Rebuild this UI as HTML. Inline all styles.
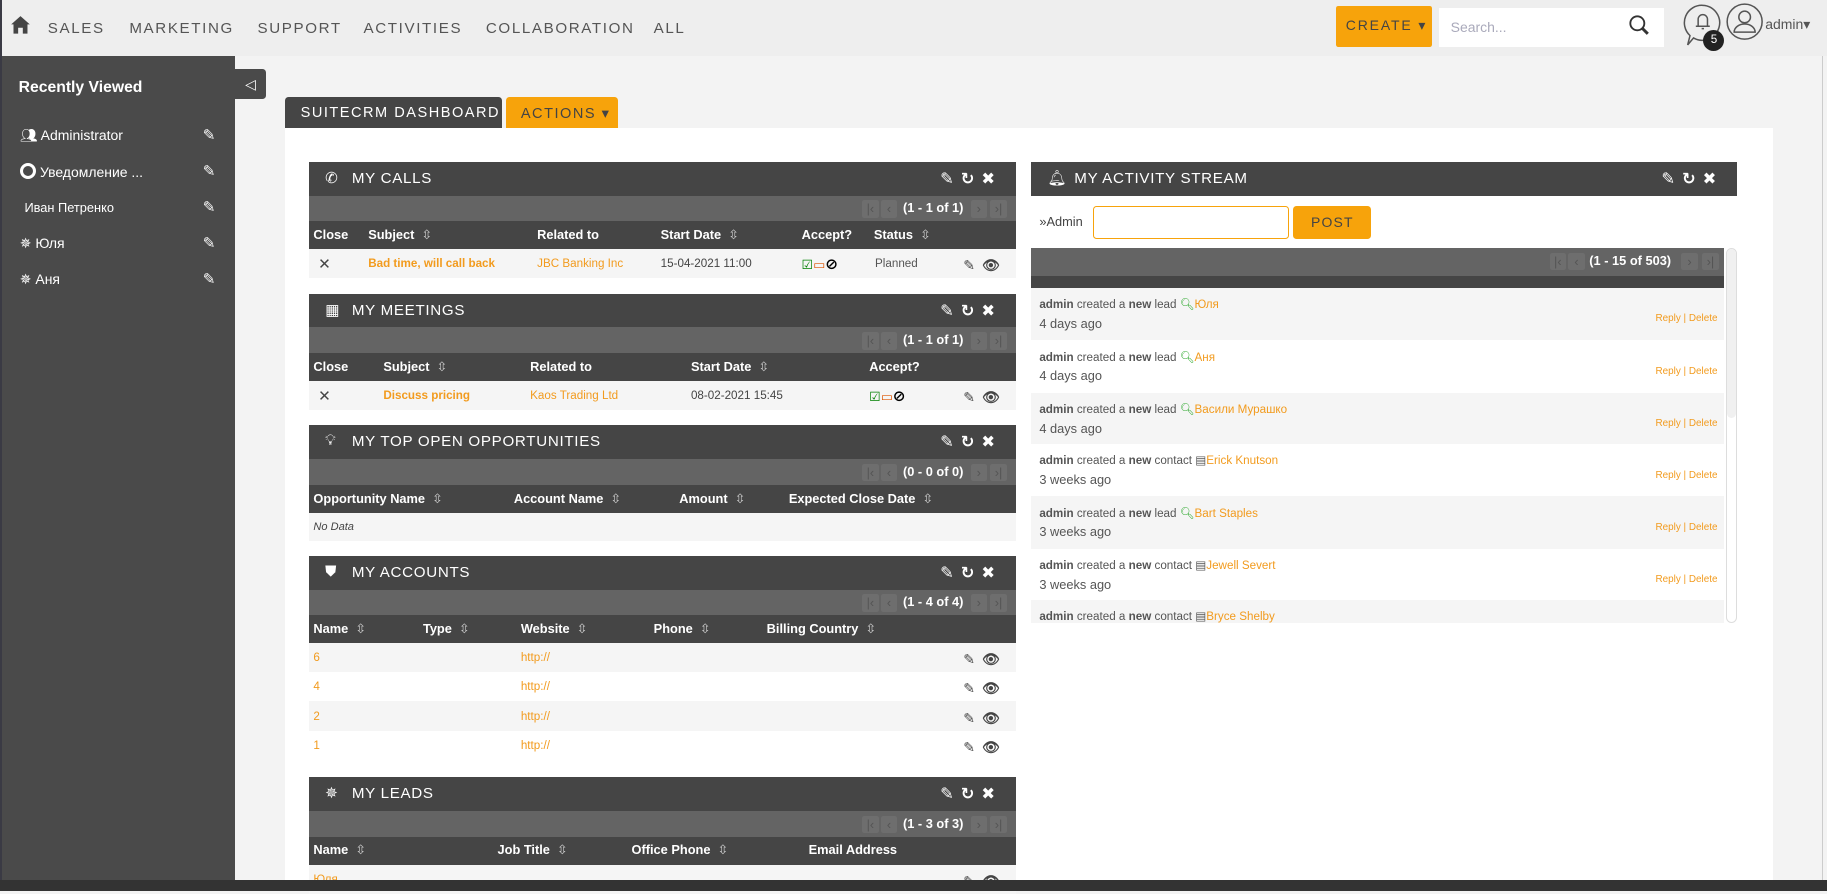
<!DOCTYPE html>
<html><head><meta charset="utf-8">
<style>
html{zoom:1.16518}
*{margin:0;padding:0;box-sizing:border-box}
body{width:1568px;height:760px;overflow:hidden;background:#f3f3f3;font-family:"Liberation Sans","DejaVu Sans",sans-serif;position:relative;color:#444}
.a{position:absolute;white-space:nowrap}
#top{position:absolute;left:0;top:0;width:1568px;height:48px;background:#eeeeee}
.nav{position:absolute;top:17px;font-size:13px;letter-spacing:1.4px;color:#555}
#side{position:absolute;left:2px;top:48px;width:200px;height:712px;background:#4a4a4a;color:#fff}
.si{position:absolute;left:15px;font-size:12px;color:#fff}
.pen{position:absolute;left:172px;font-size:13px;color:#fff;font-weight:bold}
.d{position:absolute;left:265px;width:607px}
.hd{position:absolute;left:0;width:100%;height:29px;background:#454545;color:#fff}
.hd .t{position:absolute;left:37px;top:7px;font-size:13px;letter-spacing:.6px}
.hd .ic{position:absolute;left:14px;top:6px;font-size:13px}
.tools{position:absolute;right:12px;top:6px;font-size:14px;font-weight:bold;letter-spacing:6px}
.pg{position:absolute;left:0;width:100%;height:22px;background:#646464}
.pg .b{position:absolute;top:4px;width:14px;height:15px;background:#6e6e6e;border-radius:2px;color:#555;font-size:11px;text-align:center;line-height:15px}
.pg .n{position:absolute;top:4px;font-size:11px;font-weight:bold;color:#fff}
.ch{position:absolute;left:0;width:100%;height:24px;background:#454545;color:#fff;font-size:11px;font-weight:bold}
.ch span{position:absolute;top:5px}
.ch i{font-style:normal;font-weight:normal;color:#ccc;font-size:11px;margin-left:6px}
.rw{position:absolute;left:0;width:100%;height:25px;background:#f5f5f5;font-size:10px}
.rw.w{background:#fff}
.rw span{position:absolute;top:7px}
.o{color:#f29b1e}
.eb{position:absolute;right:8px;top:5px;font-size:12px;color:#444;letter-spacing:6px;font-weight:bold}
.act{position:absolute;left:885px;width:595px;height:45px;background:#f5f5f5;font-size:10px}
.act.w{background:#fff}
.act .l1{position:absolute;left:7px;top:8px;color:#555}
.act .l2{position:absolute;left:7px;top:24px;font-size:11px;color:#555}
.act .rd{position:absolute;right:6px;top:22px;font-size:8.5px;color:#f29b1e}
</style></head><body>
<div id="top">
 <svg class="a" style="left:9px;top:13px" width="18" height="17" viewBox="0 0 18 17"><path d="M9 1 L1 8 H3 V16 H7 V11 H11 V16 H15 V8 H17 Z" fill="#444"/></svg>
 <span class="nav" style="left:41px">SALES</span>
 <span class="nav" style="left:111px">MARKETING</span>
 <span class="nav" style="left:221px">SUPPORT</span>
 <span class="nav" style="left:312px">ACTIVITIES</span>
 <span class="nav" style="left:417px">COLLABORATION</span>
 <span class="nav" style="left:561px">ALL</span>
 <div class="a" style="left:1147px;top:5px;width:82px;height:35px;background:#f7a30b;border-radius:2px"></div>
 <span class="a" style="left:1155px;top:15px;font-size:12px;letter-spacing:1.6px;color:#444">CREATE ▾</span>
 <div class="a" style="left:1235px;top:7px;width:193px;height:33px;background:#fff"></div>
 <span class="a" style="left:1245px;top:16px;font-size:12px;color:#aab">Search...</span>
 <svg class="a" style="left:1397px;top:12px" width="20" height="20"><circle cx="8" cy="8" r="6" fill="none" stroke="#333" stroke-width="1.6"/><path d="M12 12 L17 17" stroke="#333" stroke-width="2.5"/></svg>
 <svg class="a" style="left:1444px;top:3px" width="36" height="40"><path d="M17 2a15 15 0 1 1 -8 28 L4 36 L6 28 A15 15 0 0 1 17 2z" fill="none" stroke="#555" stroke-width="1.3"/><path d="M13 20 V14 a4 4 0 0 1 8 0 V20 H23 H11 Z M16 22 h2" fill="none" stroke="#555" stroke-width="1.3"/></svg>
 <div class="a" style="left:1462px;top:26px;width:18px;height:18px;border-radius:50%;background:#222;color:#fff;font-size:10px;text-align:center;line-height:18px">5</div>
 <svg class="a" style="left:1481px;top:3px" width="32" height="32"><circle cx="16" cy="16" r="15" fill="none" stroke="#555" stroke-width="1.3"/><circle cx="16" cy="12" r="5" fill="none" stroke="#555" stroke-width="1.3"/><path d="M7 25 a9 7 0 0 1 18 0 Z" fill="none" stroke="#555" stroke-width="1.3"/></svg>
 <span class="a" style="left:1515px;top:14px;font-size:12px;color:#555">admin▾</span>
</div>
<div class="a" style="left:0;top:0;width:2px;height:760px;background:#3a3a44"></div>
<div class="a" style="left:1564px;top:48px;width:1px;height:712px;background:#ccc"></div>
<div id="side">
 <span class="a" style="left:14px;top:20px;font-size:13.5px;font-weight:bold">Recently Viewed</span>
 <span class="si" style="top:61px">👥&#xFE0E; Administrator</span><span class="pen" style="top:60px">✎</span>
 <span class="si" style="top:92px"><b style="display:inline-block;width:14px;height:14px;border:3px solid #fff;border-radius:50%;vertical-align:-2px"></b> Уведомление ...</span><span class="pen" style="top:91px">✎</span>
 <span class="si" style="top:124px;left:19px;font-size:11px">Иван Петренко</span><span class="pen" style="top:122px">✎</span>
 <span class="si" style="top:154px">✵ Юля</span><span class="pen" style="top:153px">✎</span>
 <span class="si" style="top:185px">✵ Аня</span><span class="pen" style="top:184px">✎</span>
</div>
<div class="a" style="left:202px;top:59px;width:26px;height:26px;background:#4a4a4a;border-radius:0 3px 3px 0;color:#fff;font-size:12px;text-align:center;line-height:26px">◁</div>
<div class="a" style="left:245px;top:83px;width:186px;height:28px;background:#454545;border-radius:3px 3px 0 0;color:#fff;font-size:12.5px;letter-spacing:1.3px;padding:7px 0 0 13px">SUITECRM DASHBOARD</div>
<div class="a" style="left:434px;top:83px;width:96px;height:28px;background:#f7a30b;border-radius:3px 3px 0 0;color:#444;font-size:12.5px;letter-spacing:1.3px;padding:7px 0 0 13px">ACTIONS ▾</div>
<div class="a" style="left:245px;top:110px;width:1277px;height:650px;background:#fff"></div>

<div class="d" style="top:139px;height:100px">
 <div class="hd" style="top:0"><span class="ic">✆</span><span class="t">MY CALLS</span><span class="tools">✎↻✖</span></div>
 <div class="pg" style="top:29px"><span class="b" style="left:475px">|‹</span><span class="b" style="left:491px">‹</span><span class="n" style="left:510px">(1 - 1 of 1)</span><span class="b" style="left:568px">›</span><span class="b" style="left:585px">›|</span></div>
 <div class="ch" style="top:51px"><span style="left:4px">Close</span><span style="left:51px">Subject<i>⇳</i></span><span style="left:196px">Related to</span><span style="left:302px">Start Date<i>⇳</i></span><span style="left:423px">Accept?</span><span style="left:485px">Status<i>⇳</i></span></div>
 <div class="rw" style="top:75px"><span style="left:8px;top:5px;font-size:13px;font-weight:bold">✕</span><span class="o" style="left:51px;font-weight:bold">Bad time, will call back</span><span class="o" style="left:196px">JBC Banking Inc</span><span style="left:302px">15-04-2021 11:00</span><span style="left:423px;top:5px;font-size:11px"><b style="color:green">☑</b><b style="color:#d50">▭</b><b style="color:#000;font-size:13px">⊘</b></span><span style="left:486px;color:#555">Planned</span><span class="eb">✎👁&#xFE0E;</span></div>
</div>
<div class="d" style="top:252px;height:100px">
 <div class="hd" style="top:0"><span class="ic">▦</span><span class="t">MY MEETINGS</span><span class="tools">✎↻✖</span></div>
 <div class="pg" style="top:29px"><span class="b" style="left:475px">|‹</span><span class="b" style="left:491px">‹</span><span class="n" style="left:510px">(1 - 1 of 1)</span><span class="b" style="left:568px">›</span><span class="b" style="left:585px">›|</span></div>
 <div class="ch" style="top:51px"><span style="left:4px">Close</span><span style="left:64px">Subject<i>⇳</i></span><span style="left:190px">Related to</span><span style="left:328px">Start Date<i>⇳</i></span><span style="left:481px">Accept?</span></div>
 <div class="rw" style="top:75px"><span style="left:8px;top:5px;font-size:13px;font-weight:bold">✕</span><span class="o" style="left:64px;font-weight:bold">Discuss pricing</span><span class="o" style="left:190px">Kaos Trading Ltd</span><span style="left:328px">08-02-2021 15:45</span><span style="left:481px;top:5px;font-size:11px"><b style="color:green">☑</b><b style="color:#d50">▭</b><b style="color:#000;font-size:13px">⊘</b></span><span class="eb">✎👁&#xFE0E;</span></div>
</div>
<div class="d" style="top:365px;height:100px">
 <div class="hd" style="top:0"><span class="ic">💡&#xFE0E;</span><span class="t">MY TOP OPEN OPPORTUNITIES</span><span class="tools">✎↻✖</span></div>
 <div class="pg" style="top:29px"><span class="b" style="left:475px">|‹</span><span class="b" style="left:491px">‹</span><span class="n" style="left:510px">(0 - 0 of 0)</span><span class="b" style="left:568px">›</span><span class="b" style="left:585px">›|</span></div>
 <div class="ch" style="top:51px"><span style="left:4px">Opportunity Name<i>⇳</i></span><span style="left:176px">Account Name<i>⇳</i></span><span style="left:318px">Amount<i>⇳</i></span><span style="left:412px">Expected Close Date<i>⇳</i></span></div>
 <div class="rw" style="top:75px;height:24px"><span style="left:4px;font-style:italic;font-size:9.5px">No Data</span></div>
</div>
<div class="d" style="top:477px;height:176px">
 <div class="hd" style="top:0"><span class="ic">⛊</span><span class="t">MY ACCOUNTS</span><span class="tools">✎↻✖</span></div>
 <div class="pg" style="top:29px"><span class="b" style="left:475px">|‹</span><span class="b" style="left:491px">‹</span><span class="n" style="left:510px">(1 - 4 of 4)</span><span class="b" style="left:568px">›</span><span class="b" style="left:585px">›|</span></div>
 <div class="ch" style="top:51px"><span style="left:4px">Name<i>⇳</i></span><span style="left:98px">Type<i>⇳</i></span><span style="left:182px">Website<i>⇳</i></span><span style="left:296px">Phone<i>⇳</i></span><span style="left:393px">Billing Country<i>⇳</i></span></div>
 <div class="rw" style="top:75px"><span class="o" style="left:4px">6</span><span class="o" style="left:182px">http://</span><span class="eb">✎👁&#xFE0E;</span></div>
 <div class="rw w" style="top:100px"><span class="o" style="left:4px">4</span><span class="o" style="left:182px">http://</span><span class="eb">✎👁&#xFE0E;</span></div>
 <div class="rw" style="top:125px"><span class="o" style="left:4px">2</span><span class="o" style="left:182px">http://</span><span class="eb">✎👁&#xFE0E;</span></div>
 <div class="rw w" style="top:150px"><span class="o" style="left:4px">1</span><span class="o" style="left:182px">http://</span><span class="eb">✎👁&#xFE0E;</span></div>
</div>
<div class="d" style="top:667px;height:93px">
 <div class="hd" style="top:0"><span class="ic">✵</span><span class="t">MY LEADS</span><span class="tools">✎↻✖</span></div>
 <div class="pg" style="top:29px"><span class="b" style="left:475px">|‹</span><span class="b" style="left:491px">‹</span><span class="n" style="left:510px">(1 - 3 of 3)</span><span class="b" style="left:568px">›</span><span class="b" style="left:585px">›|</span></div>
 <div class="ch" style="top:51px"><span style="left:4px">Name<i>⇳</i></span><span style="left:162px">Job Title<i>⇳</i></span><span style="left:277px">Office Phone<i>⇳</i></span><span style="left:429px">Email Address</span></div>
 <div class="rw" style="top:75px"><span class="o" style="left:4px">Юля</span><span class="eb">✎👁&#xFE0E;</span></div>
</div>

<div class="d" style="left:885px;width:606px;top:139px;height:30px">
 <div class="hd" style="top:0"><span class="ic">🔔&#xFE0E;</span><span class="t">MY ACTIVITY STREAM</span><span class="tools">✎↻✖</span></div>
</div>
<span class="a" style="left:892px;top:184px;font-size:11px;color:#444">»Admin</span>
<div class="a" style="left:938px;top:177px;width:168px;height:28px;border:1px solid #f7a30b;border-radius:3px;background:#fff"></div>
<div class="a" style="left:1110px;top:177px;width:67px;height:28px;background:#f7a30b;border-radius:3px;font-size:12px;letter-spacing:1px;color:#444;text-align:center;line-height:28px">POST</div>
<div class="pg" style="left:885px;top:213px;width:595px;height:24px"><span class="b" style="left:445px">|‹</span><span class="b" style="left:461px">‹</span><span class="n" style="left:479px">(1 - 15 of 503)</span><span class="b" style="left:558px">›</span><span class="b" style="left:576px">›|</span></div>
<div class="a" style="left:885px;top:237px;width:595px;height:10px;background:#454545"></div>
<div class="a" style="left:1481px;top:213px;width:10px;height:322px;border:1px solid #ddd;border-radius:5px;background:#fff"></div>
<div class="a" style="left:1482px;top:214px;width:8px;height:145px;border-radius:4px;background:#f0f0f0"></div>
<div class="act" style="top:247px"><span class="l1"><b>admin</b> created a <b>new</b> lead <span style="color:#3a3">🔍&#xFE0E;</span><span class="o">Юля</span></span><span class="l2">4 days ago</span><span class="rd">Reply | Delete</span></div>
<div class="act w" style="top:292px"><span class="l1"><b>admin</b> created a <b>new</b> lead <span style="color:#3a3">🔍&#xFE0E;</span><span class="o">Аня</span></span><span class="l2">4 days ago</span><span class="rd">Reply | Delete</span></div>
<div class="act" style="top:337px"><span class="l1"><b>admin</b> created a <b>new</b> lead <span style="color:#3a3">🔍&#xFE0E;</span><span class="o">Васили Мурашко</span></span><span class="l2">4 days ago</span><span class="rd">Reply | Delete</span></div>
<div class="act w" style="top:381px"><span class="l1"><b>admin</b> created a <b>new</b> contact ▤<span class="o">Erick Knutson</span></span><span class="l2">3 weeks ago</span><span class="rd">Reply | Delete</span></div>
<div class="act" style="top:426px"><span class="l1"><b>admin</b> created a <b>new</b> lead <span style="color:#3a3">🔍&#xFE0E;</span><span class="o">Bart Staples</span></span><span class="l2">3 weeks ago</span><span class="rd">Reply | Delete</span></div>
<div class="act w" style="top:471px"><span class="l1"><b>admin</b> created a <b>new</b> contact ▤<span class="o">Jewell Severt</span></span><span class="l2">3 weeks ago</span><span class="rd">Reply | Delete</span></div>
<div class="act" style="top:515px;height:20px;overflow:hidden"><span class="l1"><b>admin</b> created a <b>new</b> contact ▤<span class="o">Bryce Shelby</span></span></div>

<div class="a" style="left:0;top:755px;width:1568px;height:10px;background:#333"></div>
</body></html>
